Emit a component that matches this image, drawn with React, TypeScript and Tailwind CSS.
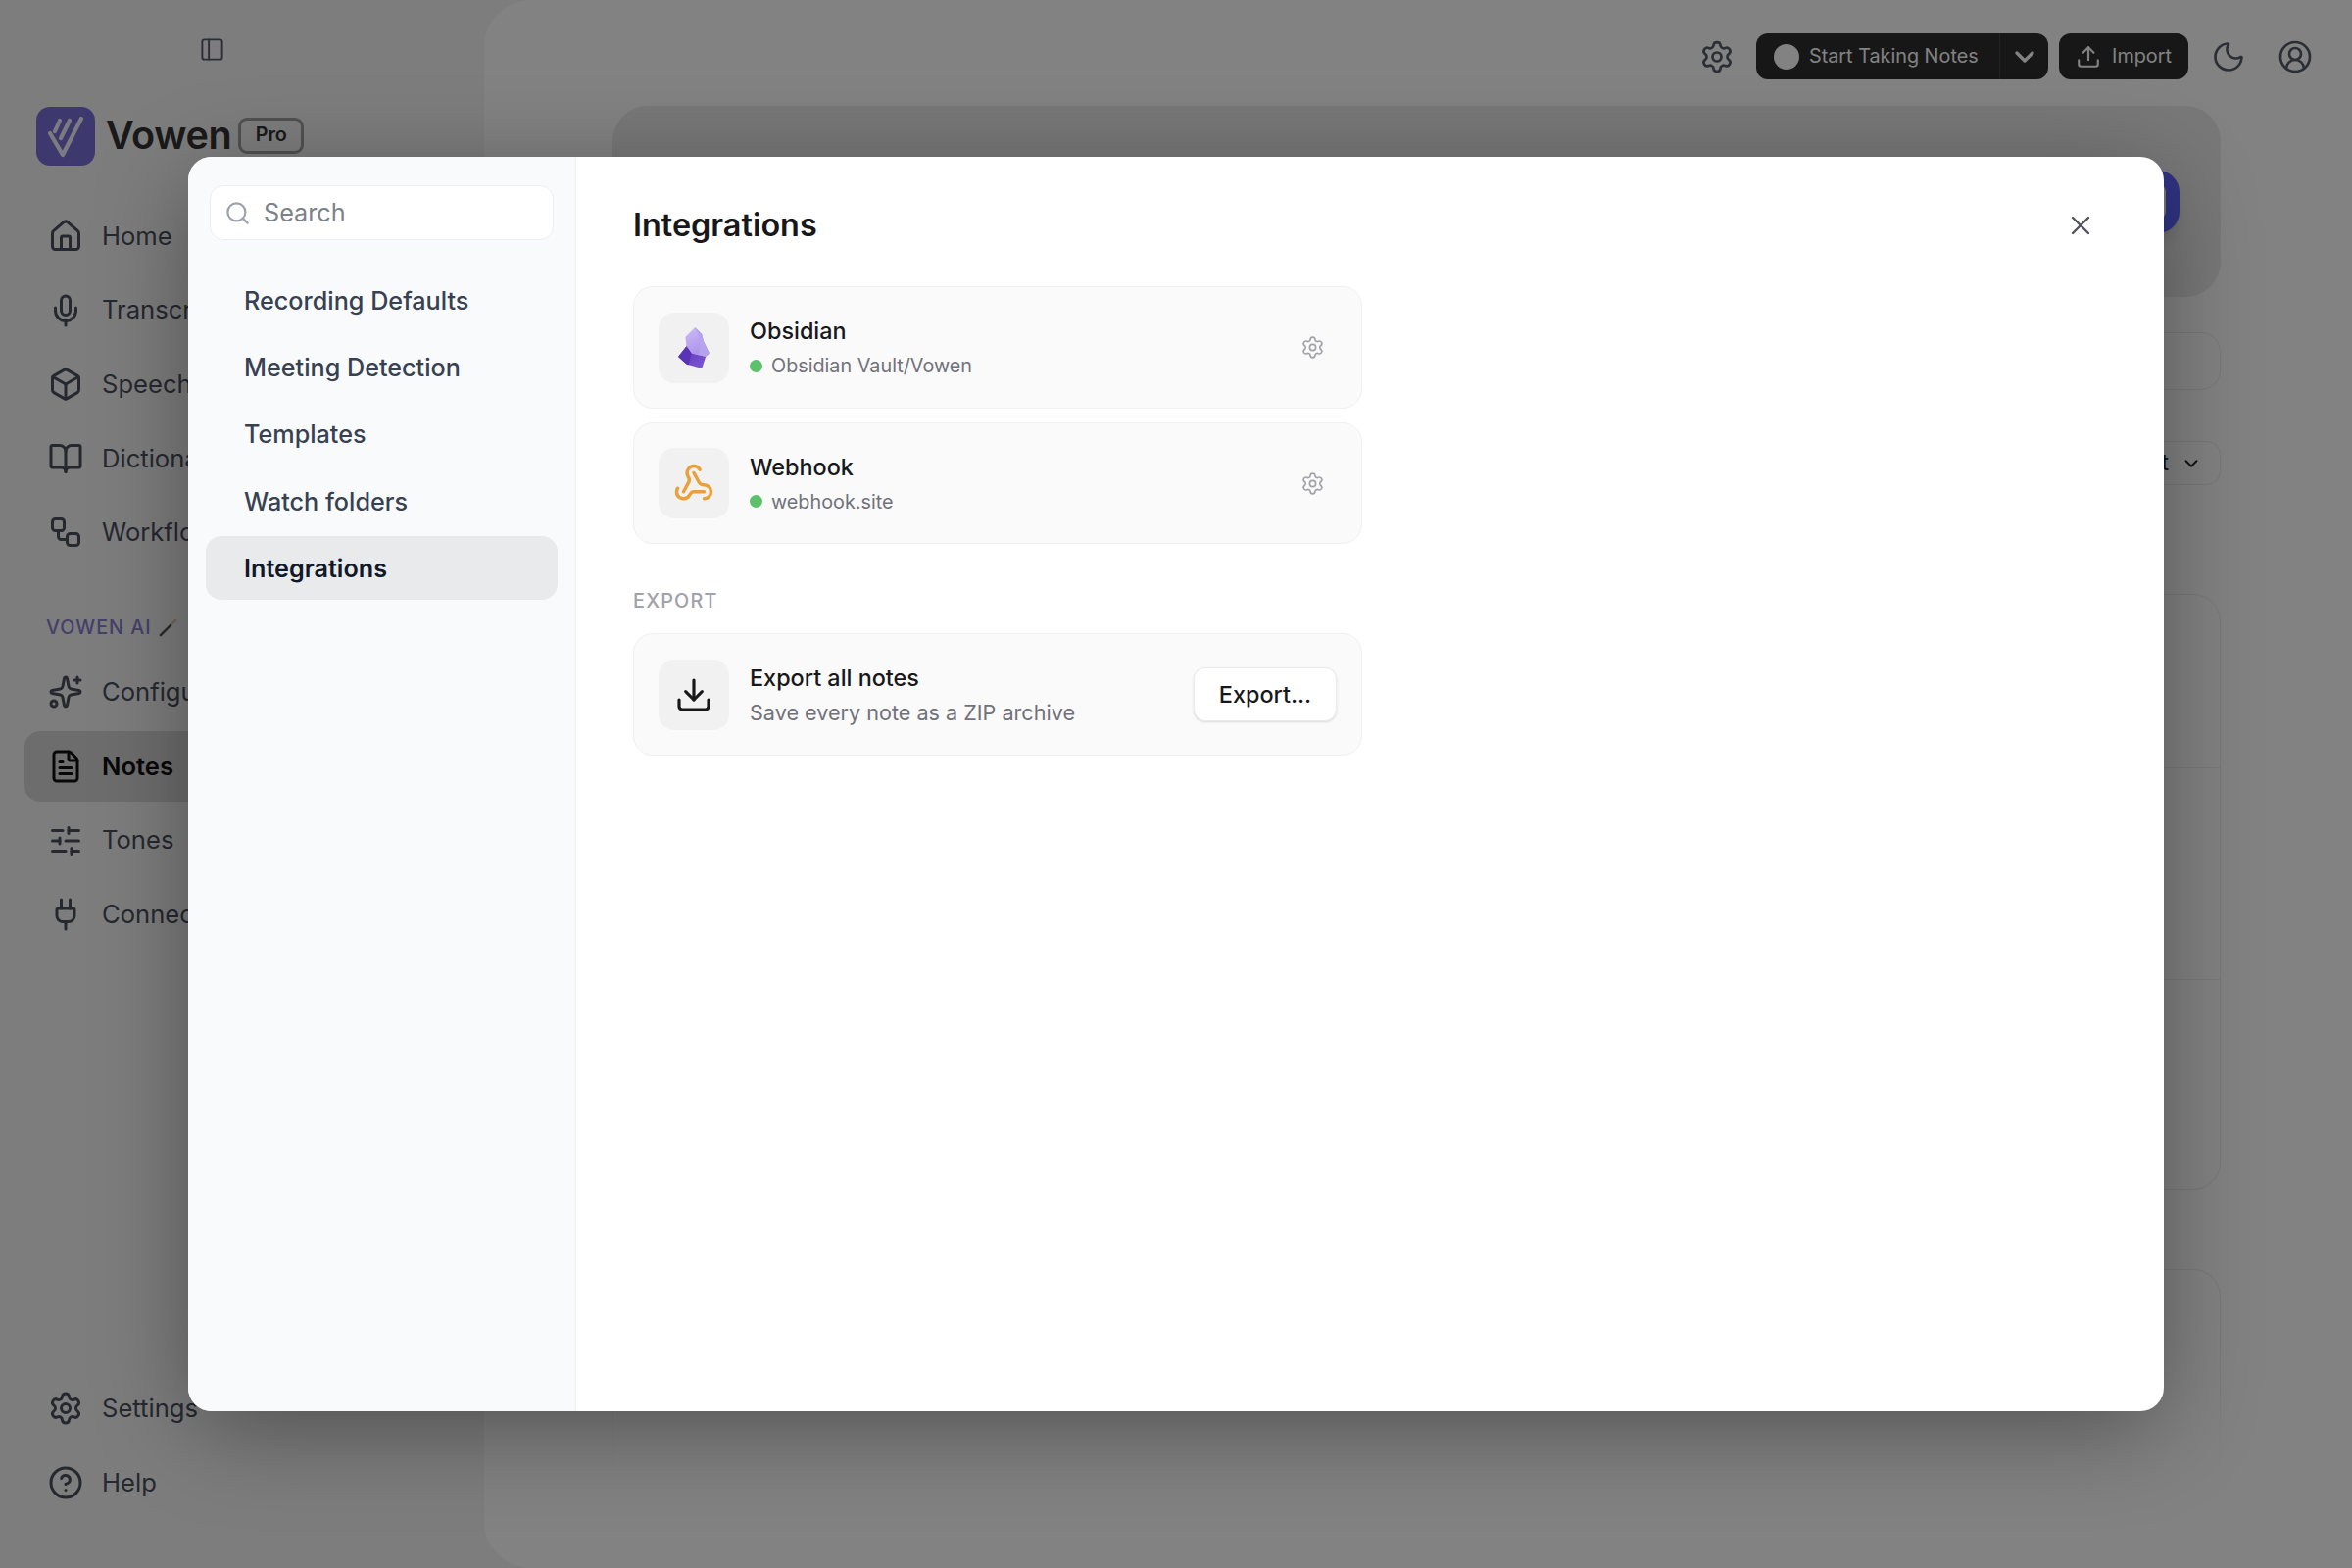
import {
  Box,
  BookOpen,
  ChevronDown,
  CircleHelp,
  CircleUserRound,
  Download,
  FileText,
  House,
  Mic,
  Moon,
  PanelLeft,
  Plug,
  Search,
  Settings,
  SlidersHorizontal,
  Sparkles,
  Upload,
  Webhook,
  Workflow,
  X,
} from "lucide-react";
import type { ComponentType, ReactNode } from "react";

type NavItem = { label: string; icon: ComponentType<{ size?: number; strokeWidth?: number }>; active?: boolean };

const mainNav: NavItem[] = [
  { label: "Home", icon: House },
  { label: "Transcribe", icon: Mic },
  { label: "Speech Models", icon: Box },
  { label: "Dictionary", icon: BookOpen },
  { label: "Workflows", icon: Workflow },
];

const aiNav: NavItem[] = [
  { label: "Configure", icon: Sparkles },
  { label: "Notes", icon: FileText, active: true },
  { label: "Tones", icon: SlidersHorizontal },
  { label: "Connect", icon: Plug },
];

const footerNav: NavItem[] = [
  { label: "Settings", icon: Settings },
  { label: "Help", icon: CircleHelp },
];

const sections = ["Recording Defaults", "Meeting Detection", "Templates", "Watch folders", "Integrations"];

function NavRow({ item }: { item: NavItem }) {
  const Icon = item.icon;
  return (
    <div
      className={`flex h-[72px] items-center gap-[19px] rounded-[16px] pl-[24px] text-[25.6px] ${
        item.active ? "bg-[#d6d6d6] font-semibold text-[#111111]" : "font-normal text-[#4a505c]"
      }`}
    >
      <Icon size={36} strokeWidth={2} />
      <span className="whitespace-nowrap">{item.label}</span>
    </div>
  );
}

function VowenLogo() {
  return (
    <div className="h-[60px] w-[60px] rounded-[14px] bg-[#7870d8]">
      <svg viewBox="0 0 60 60" className="h-full w-full" fill="none" stroke="#ffffff" strokeOpacity={0.9} strokeWidth={4.2} strokeLinecap="round" strokeLinejoin="round">
        <path d="M46 12 27 49 14 27" />
        <path d="M24 14 19 25" />
        <path d="M34 14 25 32" />
      </svg>
    </div>
  );
}

function WandIcon() {
  return (
    <svg viewBox="0 0 20 20" className="h-[19px] w-[19px]" fill="none">
      <path d="M2 18 13 7" stroke="#555555" strokeWidth={2.6} strokeLinecap="round" />
      <path d="M14 6 18 2" stroke="#d9c9a8" strokeWidth={2.4} strokeLinecap="round" />
    </svg>
  );
}

function ObsidianIcon() {
  return (
    <svg viewBox="0 0 91 120" className="h-[42px] w-[32px]">
      <defs>
        <linearGradient id="obsTop" x1="0.3" y1="0" x2="0.7" y2="1">
          <stop offset="0" stopColor="#c9b8f6" />
          <stop offset="1" stopColor="#a68de8" />
        </linearGradient>
        <linearGradient id="obsLow" x1="0" y1="0" x2="1" y2="1">
          <stop offset="0" stopColor="#5a32b4" />
          <stop offset="1" stopColor="#8059d6" />
        </linearGradient>
      </defs>
      <polygon points="49,0 21,28 24,55 39,76 80,86 91,76 74,40 69,20" fill="url(#obsTop)" />
      <polygon points="49,0 69,20 74,40 91,76 80,86 60,80 64,44 56,16" fill="#b7a2ee" />
      <polygon points="24,55 0,86 24,107 69,120 80,86 39,76" fill="url(#obsLow)" />
      <polygon points="24,55 39,76 30,110 24,107 0,86" fill="#5b33b6" />
    </svg>
  );
}

function IntegrationCard({ icon, title, children, action, short }: { icon: ReactNode; title: string; children: ReactNode; action: ReactNode; short?: boolean }) {
  return (
    <div
      className={`flex items-center gap-[21px] rounded-[20px] border border-[#f0f0f0] bg-[#fafafa] pl-[25px] pr-[25px] ${
        short ? "h-[124px]" : "h-[125px]"
      }`}
    >
      <div className="grid h-[72px] w-[72px] shrink-0 place-items-center rounded-[16px] bg-[#f1f1f1]">{icon}</div>
      <div className="min-w-0 flex-1">
        <div className="text-[23.4px] font-medium leading-[34px] text-[#18181b]">{title}</div>
        <div className="mt-[3px] leading-[30px]">{children}</div>
      </div>
      {action}
    </div>
  );
}

function Status({ text }: { text: string }) {
  return (
    <div className="flex items-center gap-[9px] text-[19.8px] text-[#71717a]">
      <span className="h-[13px] w-[13px] rounded-full bg-[#5cc168]" />
      {text}
    </div>
  );
}

function GearButton() {
  return (
    <span className="mr-[12px] text-[#a1a1aa]">
      <Settings size={25} strokeWidth={1.6} />
    </span>
  );
}

export default function App() {
  return (
    <div className="relative flex h-[1600px] w-[2400px] overflow-hidden bg-[#f6f6f6] [font-family:Inter,sans-serif]">
      <aside className="flex w-[494px] shrink-0 flex-col px-[25px] pb-[51px] pt-[36px]">
        <div className="ml-[178px] flex h-[28px] items-center text-[#555b68]">
          <PanelLeft size={27} strokeWidth={1.7} />
        </div>
        <div className="ml-[12px] mt-[45px] flex h-[60px] items-center">
          <VowenLogo />
          <span className="mb-[2px] ml-[11px] text-[39.6px] font-semibold leading-[56px] tracking-[-0.4px] text-[#333333]">Vowen</span>
          <span className="mb-[2px] ml-[7px] flex h-[37px] w-[67px] items-center justify-center rounded-[9px] border-[3px] border-[#a0a0a0] text-[19.8px] font-semibold text-[#333333]">
            Pro
          </span>
        </div>
        <nav className="mt-[36px] flex flex-col gap-[3.6px]">
          {mainNav.map((item) => (
            <NavRow key={item.label} item={item} />
          ))}
        </nav>
        <div className="mb-[15px] ml-[22px] mt-[46px] flex h-[30px] items-center gap-[7px] text-[19.8px] font-medium tracking-[1px] text-[#857ed0]">
          VOWEN AI <WandIcon />
        </div>
        <nav className="flex flex-col gap-[3.6px]">
          {aiNav.map((item) => (
            <NavRow key={item.label} item={item} />
          ))}
        </nav>
        <nav className="mt-auto flex flex-col gap-[3.6px]">
          {footerNav.map((item) => (
            <NavRow key={item.label} item={item} />
          ))}
        </nav>
      </aside>

      <main className="relative flex h-[1600px] flex-1 flex-col overflow-hidden rounded-l-[48px] bg-white pl-[131px] pr-[134px] pt-[34px]">
        <header className="-mr-[94px] flex h-[47px] shrink-0 items-center justify-end">
          <span className="mr-[22px] text-[#555b68]">
            <Settings size={36} strokeWidth={1.8} />
          </span>
          <div className="flex h-[47px] w-[298px] items-center rounded-[12px] bg-[#2e2e2e] text-[19.8px] text-white">
            <span className="ml-[18px] h-[26px] w-[26px] rounded-full bg-white" />
            <span className="ml-[10px] w-[194px] whitespace-nowrap pt-[1px]">Start Taking Notes</span>
            <span className="flex h-full flex-1 items-center justify-center border-l border-[#444444]">
              <ChevronDown size={32} strokeWidth={2.6} />
            </span>
          </div>
          <div className="ml-[11px] flex h-[47px] w-[132px] items-center justify-center gap-[11px] rounded-[12px] bg-[#2e2e2e] text-[19.8px] text-white">
            <Upload size={26} strokeWidth={2} />
            <span className="pt-[1px]">Import</span>
          </div>
          <span className="ml-[23px] text-[#555b68]">
            <Moon size={36} strokeWidth={1.8} />
          </span>
          <span className="ml-[32px] text-[#555b68]">
            <CircleUserRound size={36} strokeWidth={1.8} />
          </span>
        </header>

        <section className="mt-[27px] flex h-[195px] shrink-0 items-center justify-end rounded-[36px] border border-[#ebebeb] bg-[#ececec] pr-[41px]">
          <div className="h-[64px] w-[64px] rounded-[22px] border-[14px] border-[#5c66ff] shadow-lg" />
        </section>

        <div className="mt-[36px] h-[59px] shrink-0 rounded-[20px] border border-[#ececec]" />

        <div className="mt-[52px] flex shrink-0 justify-end">
          <div className="flex h-[45px] items-center gap-[12px] rounded-[14px] border border-[#ececec] px-[18px] text-[23px] text-[#222222]">
            Recent
            <ChevronDown size={22} strokeWidth={2} />
          </div>
        </div>

        <div className="mt-[111px] flex h-[608px] shrink-0 flex-col rounded-[28px] border border-[#ececec]">
          <div className="h-[177px] border-b border-[#ececec]" />
          <div className="h-[216px] border-b border-[#ececec]" />
          <div className="flex-1" />
        </div>

        <div className="mt-[81px] h-[300px] shrink-0 rounded-[28px] border border-[#ececec]" />
        <div className="absolute inset-x-0 bottom-0 h-[220px] bg-gradient-to-t from-white from-[40%] to-transparent" />
      </main>

      <div className="absolute inset-0 flex items-center justify-center bg-black/[0.49]">
        <div className="flex h-[1280px] w-[2016px] overflow-hidden rounded-[24px] bg-white shadow-[0_20px_100px_-8px_rgba(0,0,0,0.4)]">
          <div className="flex w-[396px] shrink-0 flex-col border-r border-[#eeeff1] bg-[#f9fafb] pl-[18px] pr-[18px] pt-[29px]">
            <div className="mx-[4px] flex h-[56px] items-center gap-[13px] rounded-[14px] border border-[#eceef1] bg-white pl-[14px] text-[25.2px] text-[#7c8189]">
              <span className="text-[#9ca3af]">
                <Search size={27} strokeWidth={2} />
              </span>
              <span className="pt-[1px]">Search</span>
            </div>
            <div className="mt-[28px] flex flex-col gap-[3.4px]">
              {sections.map((s) => (
                <div
                  key={s}
                  className={`flex h-[65px] items-center rounded-[16px] pl-[39px] pt-[4px] text-[25.2px] ${
                    s === "Integrations" ? "bg-[#e9eaec] font-semibold text-[#111827]" : "font-medium text-[#374151]"
                  }`}
                >
                  {s}
                </div>
              ))}
            </div>
          </div>

          <div className="flex flex-1 items-start pl-[58px] pr-[69px] pt-[48px]">
            <div className="w-[744px]">
              <h2 className="text-[32.4px] font-semibold leading-[44px] text-[#18181b]">Integrations</h2>
              <div className="mt-[40px] flex flex-col gap-[14px]">
                <IntegrationCard
                  icon={<ObsidianIcon />}
                  title="Obsidian"
                  action={<GearButton />}
                >
                  <Status text="Obsidian Vault/Vowen" />
                </IntegrationCard>
                <IntegrationCard
                  short
                  icon={
                    <span className="text-[#e9a23b]">
                      <Webhook size={42} strokeWidth={2} />
                    </span>
                  }
                  title="Webhook"
                  action={<GearButton />}
                >
                  <Status text="webhook.site" />
                </IntegrationCard>
              </div>
              <div className="mb-[19px] mt-[44px] text-[19.8px] font-medium leading-[28px] tracking-[1.2px] text-[#a1a1aa]">EXPORT</div>
              <IntegrationCard
                icon={
                  <span className="text-[#18181b]">
                    <Download size={40} strokeWidth={1.9} />
                  </span>
                }
                title="Export all notes"
                action={
                  <button className="h-[55px] w-[146px] rounded-[12px] border border-[#ececec] bg-white text-[23.4px] font-medium text-[#18181b] shadow-sm">
                    Export...
                  </button>
                }
              >
                <div className="text-[21.6px] text-[#71717a]">Save every note as a ZIP archive</div>
              </IntegrationCard>
            </div>
            <div className="ml-auto mt-[6px] text-[#52525b]">
              <X size={32} strokeWidth={1.8} />
            </div>
          </div>
        </div>
      </div>
    </div>
  );
}
